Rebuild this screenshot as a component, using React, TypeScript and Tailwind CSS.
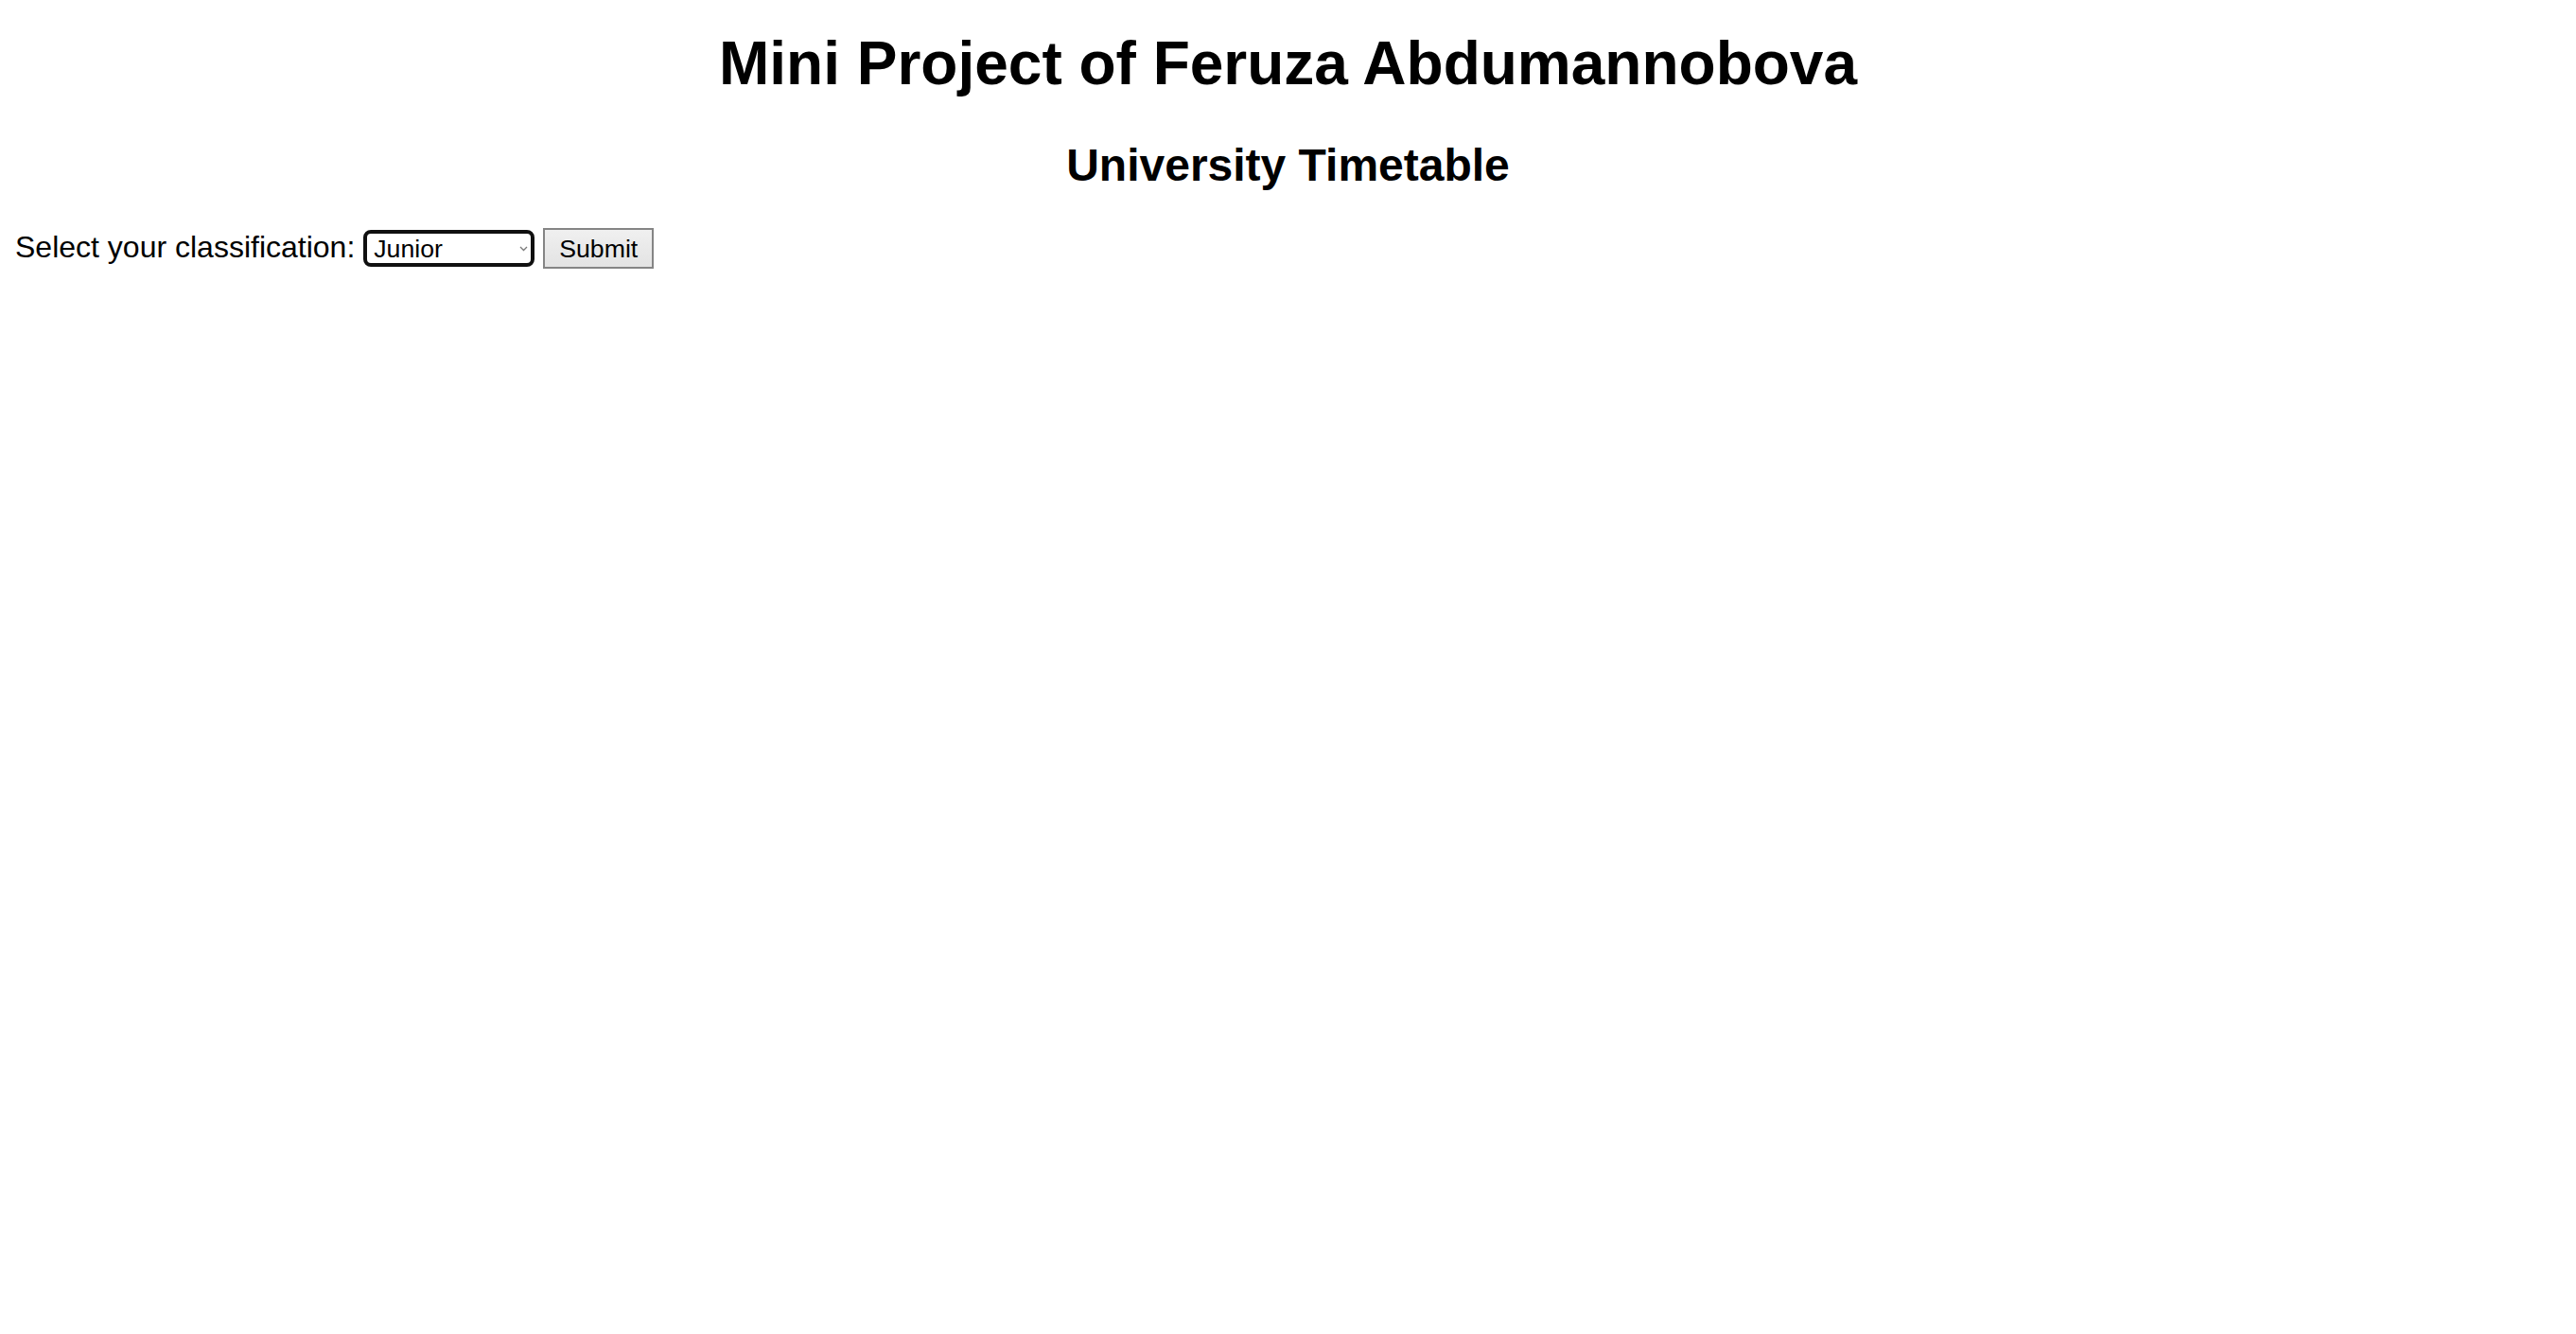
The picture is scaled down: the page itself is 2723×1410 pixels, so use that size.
import React from "react";

export default function App() {
  return (
    <div
      className="min-h-screen bg-white text-black px-[16px] pt-[30px]"
      style={{ fontFamily: '"Liberation Sans", Arial, sans-serif' }}
    >
      <h1 className="text-center text-[64px] font-bold leading-[74px] mb-[43px]">
        Mini Project of Feruza Abdumannobova
      </h1>
      <h2 className="text-center text-[48px] font-bold leading-[55px] mb-[39px]">
        University Timetable
      </h2>
      <form className="flex items-center" onSubmit={(e) => e.preventDefault()}>
        <label className="text-[32px] leading-[37px] mb-[2px]">Select your classification:</label>
        <div className="relative ml-[9px]">
          <select
            defaultValue="Junior"
            className="appearance-none w-[181px] h-[39px] border-[4px] border-[#101010] rounded-[8px] bg-white pl-[7px] text-[26.67px] leading-[30px] text-black outline-none"
            style={{ fontFamily: '"Liberation Sans", Arial, sans-serif' }}
          >
            <option>Freshman</option>
            <option>Sophomore</option>
            <option>Junior</option>
            <option>Senior</option>
          </select>
          <svg
            className="absolute right-[7px] top-[17px] pointer-events-none"
            width="9"
            height="6"
            viewBox="0 0 9 6"
          >
            <polyline points="1,1 4.5,4.5 8,1" fill="none" stroke="#7a7a7a" strokeWidth="1.3" />
          </svg>
        </div>
        <button
          type="submit"
          className="ml-[9px] h-[43px] px-[15px] border-2 border-[#858585] bg-gradient-to-b from-[#f0f0f0] to-[#e3e3e3] text-[26.67px] leading-[30px] text-black"
          style={{ fontFamily: '"Liberation Sans", Arial, sans-serif' }}
        >
          Submit
        </button>
      </form>
    </div>
  );
}
